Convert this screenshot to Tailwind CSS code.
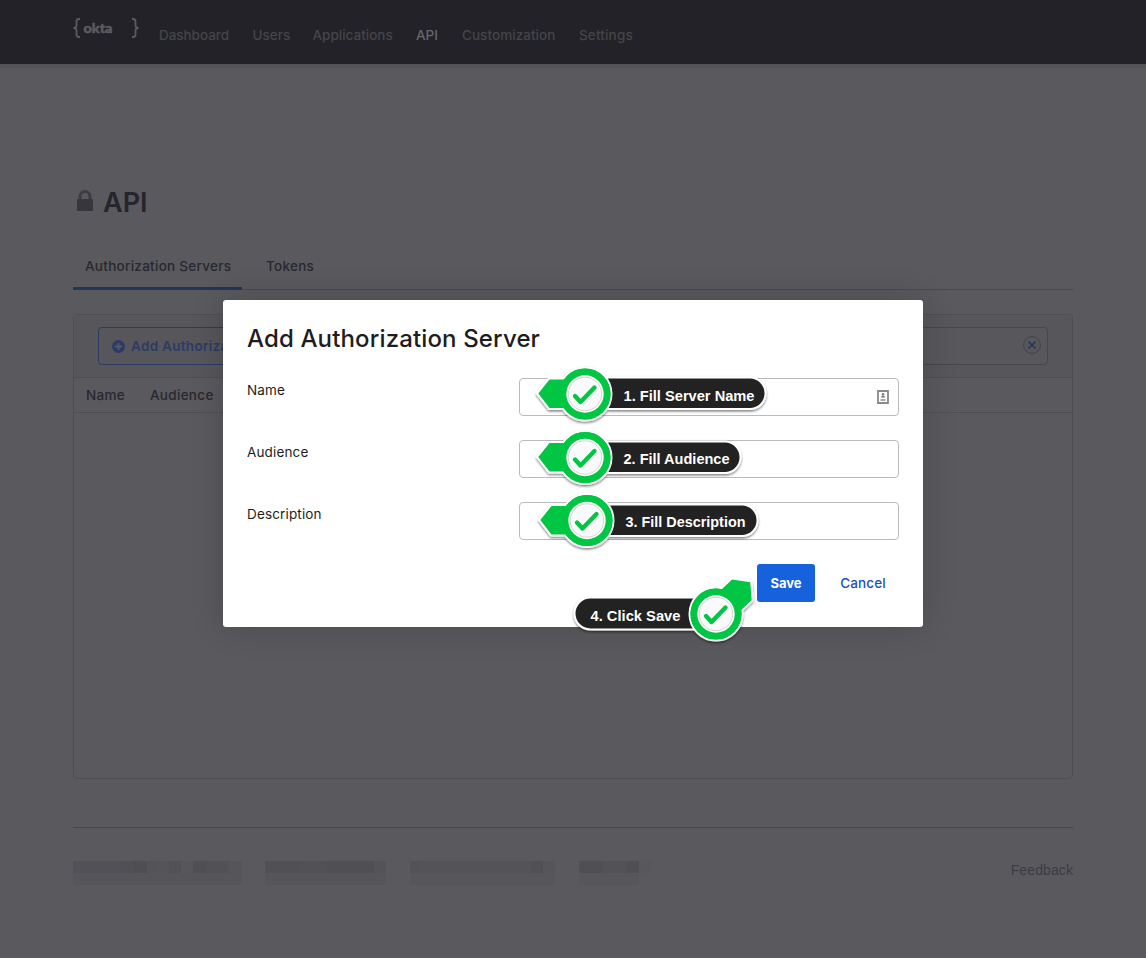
<!DOCTYPE html>
<html lang="en">
<head>
<meta charset="utf-8">
<title>API</title>
<script src="https://cdn.jsdelivr.net/npm/@tailwindcss/browser@4"></script>
</head>
<body class="relative h-[958px] w-[1146px] overflow-hidden bg-[#5a595e] font-['Inter',sans-serif] text-[13.5px] text-[#28282e]">
<header class="flex h-16 bg-[#232228] pl-[73px] shadow-[0_4px_0_#545358]">
  <svg class="mt-[18px] h-5 w-[66px] shrink-0" viewBox="0 0 66 20" fill="none" stroke="#5b5b5f" stroke-width="1.8">
    <path d="M7 1H6Q3.500 1 3.500 3.500V7.500Q3.500 10 .5 10Q3.500 10 3.500 12.500V16.500Q3.500 19 6 19H7"/>
    <path d="M59 1H60Q62.500 1 62.500 3.500V7.500Q62.500 10 65.500 10Q62.500 10 62.500 12.500V16.500Q62.500 19 60 19H59"/>
    <text x="10.500" y="14.500" textLength="29" lengthAdjust="spacingAndGlyphs" fill="#5b5b5f" stroke="#5b5b5f" stroke-width=".5" font-family="Lato" font-weight="900" font-size="12.500">okta</text>
  </svg>
  <nav class="ml-5 flex gap-6 pt-[25px] text-[13.5px] leading-5 font-medium text-[#454549]">
    <a class="w-[69.500px] tracking-[-0.05px]">Dashboard</a>
    <a class="w-9">Users</a>
    <a class="w-[79.500px]">Applications</a>
    <a class="w-[22px] text-[#66666a]">API</a>
    <a class="w-[93px] tracking-[0.05px]">Customization</a>
    <a class="w-[55px] tracking-[0.15px]">Settings</a>
  </nav>
</header>
<main class="mx-[73px] mt-[120px]">
  <h1 class="flex h-9 items-center text-[27px] font-semibold text-[#25252b]">
    <svg class="mr-[10px] mb-[3px] ml-1 h-[21px] w-4" viewBox="0 0 16 21"><path d="M3 11V6.500a5 5 0 0 1 10 0V11" fill="none" stroke="#3d3c42" stroke-width="3"/><rect y="9" width="16" height="12" rx="1" fill="#37363c"/></svg>
    <span class="pt-[2px]">API</span>
  </h1>
  <div class="mt-[22px] flex h-12 border-b border-[#48484f] leading-5 font-medium tracking-[0.28px]">
    <div class="h-12 w-[169px] border-b-[3px] border-[#25345b] pt-[14px] pl-3 whitespace-nowrap">Authorization Servers</div>
    <div class="pt-[14px] pl-6">Tokens</div>
  </div>
  <section class="mt-6 h-[465px] rounded border border-[#4f4e54]">
    <div class="flex h-[63px] items-center justify-between border-b border-[#4f4e54] bg-[#57565b] px-6">
      <button class="flex h-[38px] w-[190px] items-center rounded border border-[#2b3b66] pl-[13px] font-semibold tracking-[0.3px] whitespace-nowrap text-[#2b3b66]">
        <svg class="mr-[6px] h-[13px] w-[13px] shrink-0" viewBox="0 0 13 13"><circle cx="6.500" cy="6.500" r="6.500" fill="#2b3b66"/><path d="M6.500 3v7M3 6.500h7" stroke="#5a595e" stroke-width="1.800"/></svg>
        <span class="w-[100px] overflow-hidden">Add Authorization Server</span>
      </button>
      <div class="flex h-[38px] w-[320px] items-center justify-end rounded border border-[#48474d] bg-[#58575c]">
        <svg class="mr-[6px] mb-[2px] h-[18px] w-[18px]" viewBox="0 0 18 18" fill="none"><circle cx="9" cy="9" r="8.400" stroke="#434248"/><path d="m5.500 5.500 7 7m0-7-7 7" stroke="#2b3458" stroke-width="1.700"/></svg>
      </div>
    </div>
    <div class="flex h-[35px] items-center gap-6 border-b border-[#4f4e54] pl-3 font-medium tracking-[0.3px]"><span class="w-10">Name</span><span>Audience</span></div>
  </section>
  <footer class="mt-12 flex justify-between border-t border-[#48474d] pt-8">
    <div class="flex h-7 pt-[1px]">
      <div class="mr-[23px] flex h-6 w-[169px] flex-col"><div class="flex h-3"><i class="w-12 bg-[#525157]"></i><i class="w-3 bg-[#505055]"></i><i class="w-[14px] bg-[#4e4e53]"></i><i class="w-[10px] bg-[#545358]"></i><i class="w-3 bg-[#555459]"></i><i class="w-3 bg-[#525156]"></i><i class="w-3 bg-[#57565b]"></i><i class="w-[14px] bg-[#504f54]"></i><i class="w-[22px] bg-[#525156]"></i><i class="w-[13px] bg-[#56555a]"></i></div><i class="h-3 bg-[#565559]"></i></div>
      <div class="mr-[24px] flex h-6 w-[121px] flex-col"><div class="flex h-3"><i class="w-9 bg-[#505055]"></i><i class="w-[25px] bg-[#525156]"></i><i class="w-12 bg-[#504f54]"></i><i class="w-3 bg-[#545358]"></i></div><i class="h-3 bg-[#565559]"></i></div>
      <div class="mr-[24px] flex h-6 w-[145px] flex-col"><div class="flex h-3"><i class="w-3 bg-[#535257]"></i><i class="w-[109px] bg-[#545358]"></i><i class="w-3 bg-[#515055]"></i><i class="w-3 bg-[#565559]"></i></div><i class="h-3 bg-[#57565b]"></i></div>
      <div class="flex h-6 w-[72px] flex-col"><div class="flex h-3"><i class="w-[24px] bg-[#504f54]"></i><i class="w-6 bg-[#535257]"></i><i class="w-3 bg-[#504f54]"></i><i class="w-3 bg-[#58575c]"></i></div><i class="h-3 w-[60px] bg-[#57565b]"></i></div>
    </div>
    <a class="font-['Liberation_Sans',sans-serif] text-[14px] leading-5 tracking-[0.1px] text-[#3d3c43]">Feedback</a>
  </footer>
</main>

<div class="absolute top-[300px] left-[223px] h-[327px] w-[700px] rounded-[3px] bg-white px-6 pt-[22px] text-[#1d1d21] shadow-[0_0_32px_rgba(0,0,0,0.18)]">
  <h2 class="h-8 pt-px text-2xl leading-8 font-medium tracking-[0.14px] whitespace-nowrap">Add Authorization Server</h2>
  <div class="mt-6 flex flex-col gap-6 tracking-[0.15px]">
    <label class="flex h-[38px] justify-between"><span class="pt-0.5 leading-5">Name</span>
      <span class="flex w-[380px] items-center justify-end rounded border border-[#bbb] pr-[9px]"><svg class="h-[14px] w-3" viewBox="0 0 12 14"><path d="M1 1h10v12H1z" fill="#fff" stroke="#8a8a8a" stroke-width="1.800"/><circle cx="6" cy="4.300" r="1.200" fill="#777"/><path d="M4 7.500q0-2 2-2t2 2z" fill="#777"/><path d="M3.500 9h5v2h-5z" fill="#aaa"/></svg></span></label>
    <label class="flex h-[38px] justify-between"><span class="pt-0.5 leading-5">Audience</span><span class="w-[380px] rounded border border-[#bbb]"></span></label>
    <label class="flex h-[38px] justify-between"><span class="pt-0.5 leading-5">Description</span><span class="w-[380px] rounded border border-[#bbb]"></span></label>
  </div>
  <div class="mt-6 flex h-[38px] justify-end gap-[25px] pr-[13px]">
    <button class="w-[58px] rounded-[3px] bg-[#1662dd] pt-px text-[13px] font-bold text-white">Save</button>
    <button class="w-[46px] pt-px font-medium tracking-[0.15px] whitespace-nowrap text-[#1d4fb8]">Cancel</button>
  </div>
</div>

<svg class="absolute top-0 left-0 h-[958px] w-[1146px]" viewBox="0 0 1146 958">
  <defs>
    <filter id="shade" x="-20%" y="-30%" width="140%" height="170%"><feDropShadow dx="0" dy="1.500" stdDeviation="1.200" flood-color="#000" flood-opacity=".5"/></filter>
    <circle id="badge" r="26.500" fill="#00c643" stroke="#fff" stroke-width="2"/>
    <path id="arrow" d="M0-15.500H-36L-48-.5-36 15H0z" stroke="#fff" stroke-width="2"/>
    <path id="arrowFill" d="M0-14.500H-35.500L-46.700-.5-35.500 14H0z" fill="#00c643"/>
    <g id="dial">
      <circle r="25.600" fill="#00c643"/>
      <circle r="18.700" fill="#fff"/><circle r="16.700" fill="#fafafc" stroke="#ccc" stroke-width=".8"/>
      <path d="M-10 2-4.500 8 9.500-6.500" fill="none" stroke="#00c643" stroke-width="4.400" stroke-linecap="round" stroke-linejoin="round"/>
    </g>
  </defs>
  <g font-family="Liberation Sans, sans-serif" font-weight="700" font-size="15.500" fill="#fff">
    <g transform="translate(585 394)">
      <g filter="url(#shade)"><path d="M0-16.500H166a15.800 15.800 0 0 1 0 31.500H0z" fill="#242424" stroke="#fff" stroke-width="2"/><use href="#arrow"/><use href="#badge"/></g><use href="#arrowFill"/><use href="#dial"/>
      <text x="38.500" y="7" textLength="131" lengthAdjust="spacingAndGlyphs">1. Fill Server Name</text>
    </g>
    <g transform="translate(585 457.500)">
      <g filter="url(#shade)"><path d="M0-16H141a15.800 15.800 0 0 1 0 31.500H0z" fill="#242424" stroke="#fff" stroke-width="2"/><use href="#arrow"/><use href="#badge"/></g><use href="#arrowFill"/><use href="#dial"/>
      <text x="38.500" y="6.500" textLength="106" lengthAdjust="spacingAndGlyphs">2. Fill Audience</text>
    </g>
    <g transform="translate(587 520.500)">
      <g filter="url(#shade)"><path d="M0-16H156a15.800 15.800 0 0 1 0 31.500H0z" fill="#242424" stroke="#fff" stroke-width="2"/><use href="#arrow"/><use href="#badge"/></g><use href="#arrowFill"/><use href="#dial"/>
      <text x="38.500" y="6.500" textLength="120" lengthAdjust="spacingAndGlyphs">3. Fill Description</text>
    </g>
    <g transform="translate(716 614)">
      <g filter="url(#shade)"><path d="M0-16.500H-125.500a16 16 0 0 0 0 32H0z" fill="#242424" stroke="#fff" stroke-width="2"/><use href="#arrow" transform="rotate(136.500)"/><use href="#badge"/></g><use href="#arrowFill" transform="rotate(136.500)"/><use href="#dial"/>
      <text x="-125.500" y="7" textLength="90" lengthAdjust="spacingAndGlyphs">4. Click Save</text>
    </g>
  </g>
</svg>
</body>
</html>
